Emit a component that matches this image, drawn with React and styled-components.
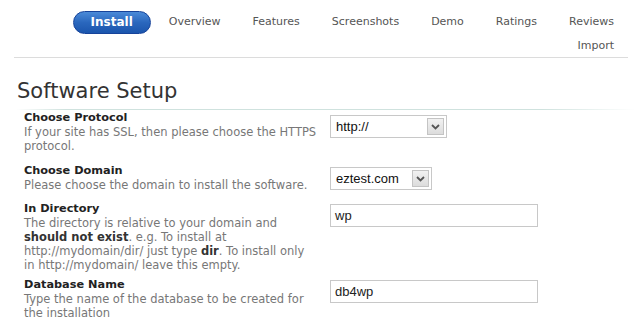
import React from "react";
import styled, { createGlobalStyle } from "styled-components";

const GlobalStyle = createGlobalStyle`
  body {
    margin: 0;
    background: #fff;
    font-family: "DejaVu Sans", Verdana, sans-serif;
  }
`;

const Page = styled.div`
  width: 634px;
  height: 334px;
  overflow: hidden;
`;

const Nav = styled.nav`
  display: flex;
  flex-wrap: wrap;
  justify-content: flex-end;
  align-items: center;
  align-content: flex-start;
  column-gap: 32px;
  padding: 10px 14px 0 0;
  height: 58px;
  box-sizing: border-box;
  margin: 0 6px 0 14px;
  border-bottom: 1px solid #dcdcdc;
`;

const NavItem = styled.a`
  font-size: 11px;
  color: #555;
  text-decoration: none;
  line-height: 24px;
`;

const InstallButton = styled.a`
  display: inline-block;
  height: 23px;
  width: 78px;
  box-sizing: border-box;
  line-height: 21px;
  text-align: center;
  margin-right: -14px;
  border-radius: 12px;
  border: 1px solid #16439a;
  background: linear-gradient(#4a8ad8, #2a67bd 50%, #1b55ad);
  color: #fff;
  font-weight: bold;
  font-size: 12px;
  text-decoration: none;
`;

const Section = styled.section`
  padding: 21px 0 0 17px;
`;

const Heading = styled.h2`
  margin: 0;
  font-size: 21px;
  font-weight: normal;
  color: #333;
  line-height: 25px;
  padding-bottom: 5px;
  border-bottom: 1px solid;
  border-image: linear-gradient(to right, #fff, #cfe2de 8%, #cfe2de 85%, #fff) 1;
`;

const Rows = styled.div`
  padding: 1px 0 0 7px;
`;

const Row = styled.div`
  display: grid;
  grid-template-columns: 306px 1fr;
  padding-bottom: ${p => p.gap || 11}px;
`;

const Label = styled.div`
  max-width: 293px;
  font-size: 11.5px;
  line-height: 14px;
  color: #777;
  & > b {
    color: #333;
  }
`;

const Title = styled.div`
  font-weight: bold;
  color: #222;
  font-size: 11.3px;
`;

const Control = styled.div`
  padding-top: ${p => p.offset || 3}px;
`;

const SelectBox = styled.div`
  display: inline-flex;
  align-items: center;
  justify-content: space-between;
  width: ${p => p.width}px;
  height: 23px;
  box-sizing: border-box;
  border: 1px solid #c8c8c8;
  padding: 0 2px 0 5px;
  font-family: "Liberation Sans", Arial, sans-serif;
  font-size: 13px;
  color: #111;
`;

const ArrowButton = styled.span`
  width: 17px;
  height: 17px;
  box-sizing: border-box;
  border: 1px solid #c4c4c4;
  background: linear-gradient(#f2f2f2, #dcdcdc);
  display: flex;
  align-items: center;
  justify-content: center;
`;

const TextInput = styled.div`
  width: 208px;
  height: 23px;
  box-sizing: border-box;
  border: 1px solid #c8c8c8;
  padding: 0 4px;
  line-height: 21px;
  font-family: "Liberation Sans", Arial, sans-serif;
  font-size: 13px;
  color: #222;
`;

const Chevron = () => (
  <svg width="9" height="6" viewBox="0 0 9 6">
    <path d="M1 1 L4.5 4.5 L8 1" fill="none" stroke="#555" strokeWidth="1.8" />
  </svg>
);

const Select = ({ value, width }) => (
  <SelectBox width={width}>
    <span>{value}</span>
    <ArrowButton>
      <Chevron />
    </ArrowButton>
  </SelectBox>
);

export default function App() {
  return (
    <Page>
      <GlobalStyle />
      <Nav>
        <InstallButton>Install</InstallButton>
        <NavItem>Overview</NavItem>
        <NavItem>Features</NavItem>
        <NavItem>Screenshots</NavItem>
        <NavItem>Demo</NavItem>
        <NavItem>Ratings</NavItem>
        <NavItem>Reviews</NavItem>
        <NavItem>Import</NavItem>
      </Nav>
      <Section>
        <Heading>Software Setup</Heading>
        <Rows>
          <Row gap={11}>
            <Label>
              <Title>Choose Protocol</Title>
              If your site has SSL, then please choose the HTTPS protocol.
            </Label>
            <Control offset={4}>
              <Select value="http://" width={117} />
            </Control>
          </Row>
          <Row gap={10}>
            <Label>
              <Title>Choose Domain</Title>
              Please choose the domain to install the software.
            </Label>
            <Control>
              <Select value="eztest.com" width={102} />
            </Control>
          </Row>
          <Row gap={6}>
            <Label>
              <Title>In Directory</Title>
              The directory is relative to your domain and <b>should not exist</b>. e.g. To
              install at http://mydomain/dir/ just type <b>dir</b>. To install only in
              http://mydomain/ leave this empty.
            </Label>
            <Control offset={2}>
              <TextInput>wp</TextInput>
            </Control>
          </Row>
          <Row>
            <Label>
              <Title>Database Name</Title>
              Type the name of the database to be created for the installation
            </Label>
            <Control offset={2}>
              <TextInput>db4wp</TextInput>
            </Control>
          </Row>
        </Rows>
      </Section>
    </Page>
  );
}
